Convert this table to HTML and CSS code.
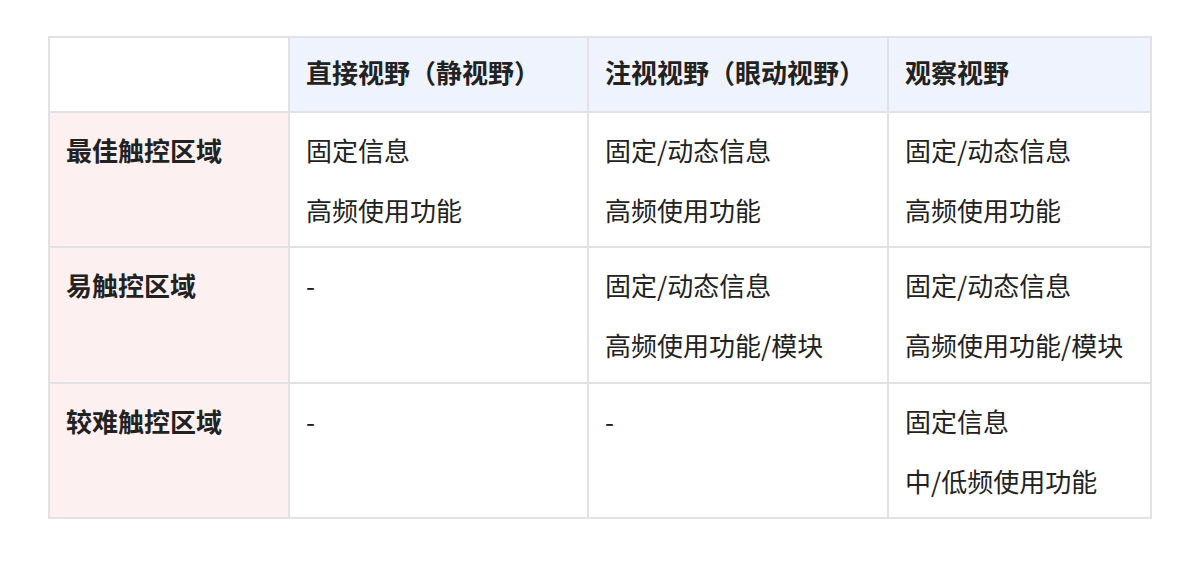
FILE: index.html
```html
<!DOCTYPE html>
<html lang="zh">
<head>
<meta charset="utf-8">
<link rel="stylesheet" href="styles.css">
</head>
<body>
<div class="page">
<table class="grid">
  <colgroup>
    <col class="c1"><col class="c2"><col class="c3"><col class="c4">
  </colgroup>
  <thead>
    <tr>
      <th class="corner"></th>
      <th class="head">直接视野（静视野）</th>
      <th class="head">注视视野（眼动视野）</th>
      <th class="head">观察视野</th>
    </tr>
  </thead>
  <tbody>
    <tr>
      <th class="label">最佳触控区域</th>
      <td><p>固定信息</p><p>高频使用功能</p></td>
      <td><p>固定/动态信息</p><p>高频使用功能</p></td>
      <td><p>固定/动态信息</p><p>高频使用功能</p></td>
    </tr>
    <tr class="mid">
      <th class="label">易触控区域</th>
      <td><p>-</p></td>
      <td><p>固定/动态信息</p><p>高频使用功能/模块</p></td>
      <td><p>固定/动态信息</p><p>高频使用功能/模块</p></td>
    </tr>
    <tr>
      <th class="label">较难触控区域</th>
      <td><p>-</p></td>
      <td><p>-</p></td>
      <td><p>固定信息</p><p>中/低频使用功能</p></td>
    </tr>
  </tbody>
</table>
</div>
</body>
</html>
```

FILE: styles.css
```css
html, body {
  margin: 0;
  padding: 0;
  background: #ffffff;
}
.page {
  padding: 36px 0 0 48px;
  font-family: "Noto Sans CJK SC", "Noto Sans", sans-serif;
  color: #222222;
}
.grid {
  border-collapse: collapse;
  width: 1102px;
  table-layout: fixed;
  font-size: 26px;
}
.c1 { width: 240px; }
.c2 { width: 299px; }
.c3 { width: 300px; }
.c4 { width: 263px; }
.grid th,
.grid td {
  border: 2px solid #e2e2e4;
  padding: 17px 16px;
  text-align: left;
  vertical-align: top;
  line-height: 39px;
}
.grid thead th {
  padding-top: 14px;
  padding-bottom: 20px;
}
.mid th,
.mid td {
  padding-bottom: 18px;
}
.head {
  background: #eef3fd;
  font-weight: 700;
}
.corner {
  background: #ffffff;
}
.label {
  background: #fdf0f0;
  font-weight: 700;
}
.grid td {
  font-weight: 400;
}
.grid p {
  margin: 0;
}
.grid p + p {
  margin-top: 21px;
}
```
